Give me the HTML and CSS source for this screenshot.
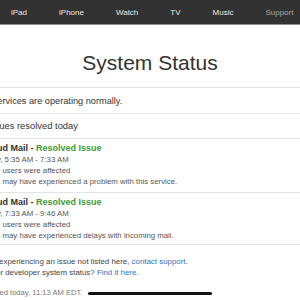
FILE: index.html
```html
<!DOCTYPE html>
<html lang="en">
<head>
    <meta charset="UTF-8">
    <title>System Status</title>
    <link rel="stylesheet" href="styles.css">
</head>
<body>
    <nav class="nav">
        <a href="#">iPad</a>
        <a href="#">iPhone</a>
        <a href="#">Watch</a>
        <a href="#">TV</a>
        <a href="#">Music</a>
        <a href="#" class="current">Support</a>
    </nav>

    <div class="page">
        <h1 class="title">System Status</h1>

        <div class="row status">All services are operating normally.</div>
        <div class="row resolved">2 issues resolved today</div>

        <div class="row incident">
            <div class="incident-name">iCloud Mail - <span class="ok">Resolved Issue</span></div>
            <div class="meta">Today, 5:35 AM - 7:33 AM</div>
            <div class="meta">Some users were affected</div>
            <div class="meta">Users may have experienced a problem with this service.</div>
        </div>

        <div class="row incident last">
            <div class="incident-name">iCloud Mail - <span class="ok">Resolved Issue</span></div>
            <div class="meta">Today, 7:33 AM - 9:46 AM</div>
            <div class="meta">Some users were affected</div>
            <div class="meta">Users may have experienced delays with incoming mail.</div>
        </div>

        <footer class="footer">
            <p>If you are experiencing an issue not listed here, <a href="#">contact support</a>.</p>
            <p>Looking for developer system status? <a href="#">Find it here</a>.</p>
            <p class="updated">Last updated today, 11:13 AM EDT.</p>
        </footer>
    </div>

    <!-- home indicator of the device -->
    <div class="home-bar"></div>
</body>
</html>
```

FILE: styles.css
```css
body {
    margin: 0;
    font-family: "Liberation Sans", Arial, sans-serif;
    background-color: #fff;
    color: #333;
    overflow: hidden;
}
.nav {
    display: flex;
    align-items: center;
    gap: 32px;
    height: 24px;
    padding-left: 11px;
    background-color: #323232;
    border-bottom: 1px solid #8c8c8c;
    font-size: 8px;
}
.nav a {
    color: #e8e8e8;
    text-decoration: none;
}
.nav a.current {
    color: #a8a8a8;
}
.page {
    width: 372px;
    margin-left: -36px;
}
.title {
    margin: 0;
    padding: 26px 0 12px;
    font-size: 21px;
    line-height: 24px;
    font-weight: normal;
    text-align: center;
    color: #333;
    border-bottom: 1px solid #e3e3e3;
}
.row {
    padding: 0 16px;
    border-bottom: 1px solid #e3e3e3;
}
.status {
    padding-top: 6px;
    padding-bottom: 5px;
    font-size: 9.2px;
    line-height: 14px;
}
.resolved {
    padding-top: 5px;
    padding-bottom: 5px;
    font-size: 9.4px;
    line-height: 14px;
}
.incident {
    padding-top: 4px;
    padding-bottom: 5px;
    line-height: 11px;
}
.incident.last {
    padding-bottom: 3px;
}
.incident-name {
    font-size: 9px;
    font-weight: bold;
}
.ok {
    color: #3e9b34;
}
.meta {
    font-size: 7.8px;
    color: #555;
}
.footer {
    padding-top: 11px;
    font-size: 7.9px;
    line-height: 11px;
    color: #444;
}
.footer p {
    margin: 0;
}
.footer a {
    color: #2f73c5;
    text-decoration: none;
}
.footer .updated {
    margin-top: 9px;
    font-size: 7.6px;
    color: #777;
}
.home-bar {
    position: absolute;
    left: 88px;
    top: 292px;
    width: 124px;
    height: 3px;
    border-radius: 2px;
    background-color: #111;
}
```
